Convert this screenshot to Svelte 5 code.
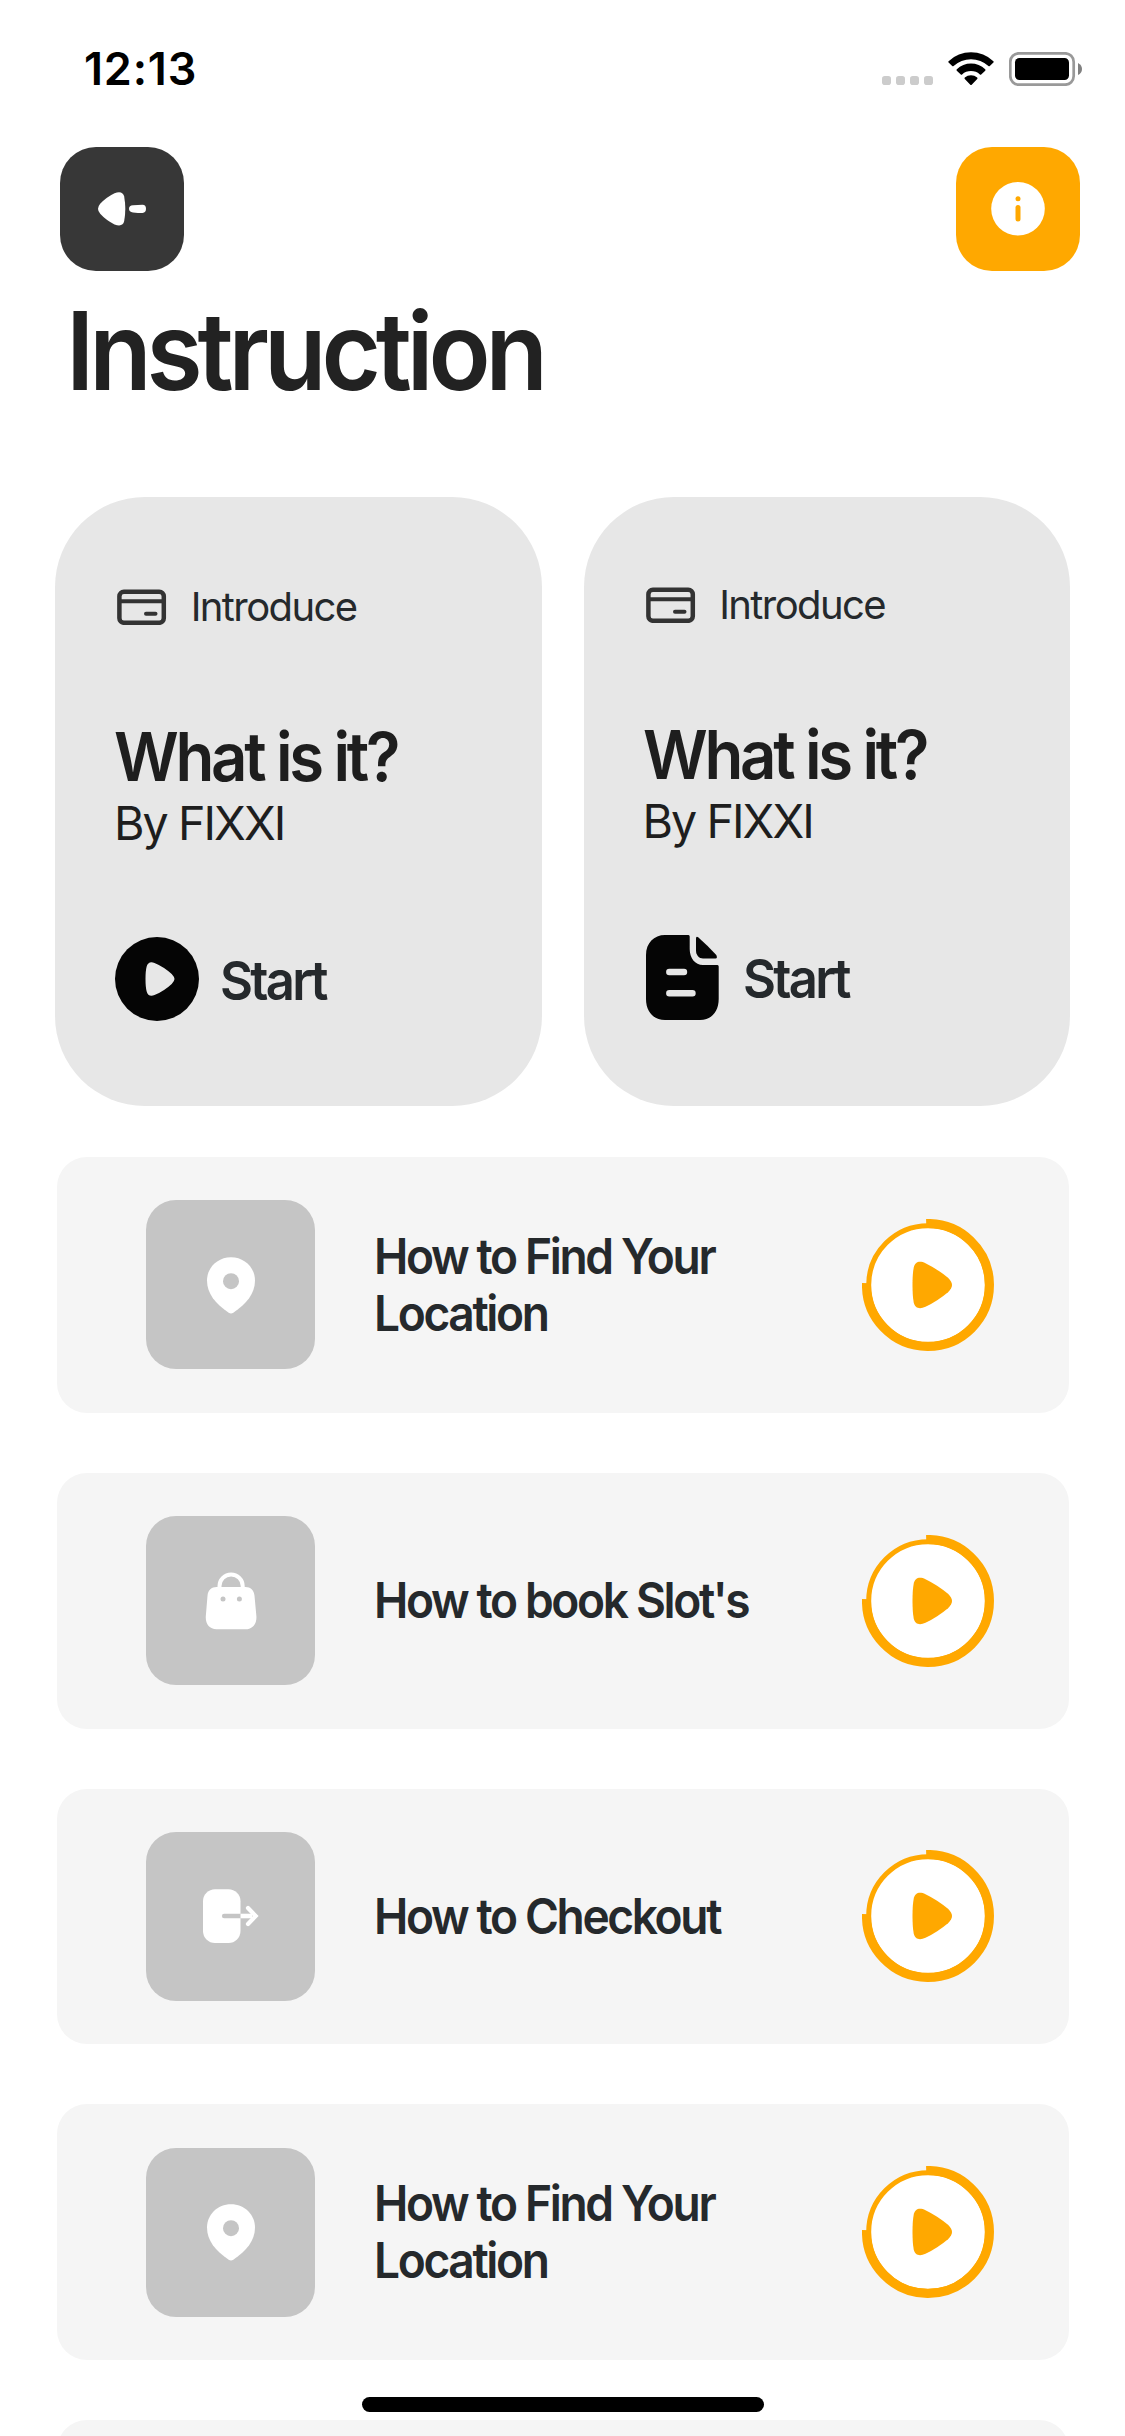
<script>
  const cards = [
    { kind: 'video', label: 'Introduce', title: 'What is it?', author: 'By FIXXI', action: 'Start' },
    { kind: 'doc', label: 'Introduce', title: 'What is it?', author: 'By FIXXI', action: 'Start' }
  ];

  const topics = [
    { icon: 'pin', text: 'How to Find Your Location' },
    { icon: 'bag', text: "How to book Slot's" },
    { icon: 'exit', text: 'How to Checkout' },
    { icon: 'pin', text: 'How to Find Your Location' }
  ];
</script>

<div class="screen">
  <header class="status">
    <span class="time">12:13</span>
    <div class="indicators">
      <svg class="dots" width="51" height="9" viewBox="0 0 51 9" fill="#ccc">
        <rect width="9" height="9" rx="2.8" />
        <rect x="14" width="9" height="9" rx="2.8" />
        <rect x="28" width="9" height="9" rx="2.8" />
        <rect x="42" width="9" height="9" rx="2.8" />
      </svg>
      <svg class="wifi" width="46" height="34" viewBox="0 0 46 34">
        <path d="M0.6 9.2A32.6 32.6 0 0 1 45.4 9.2Q46 9.9 45.4 10.5L41.8 14Q41.1 14.6 40.4 14A25.6 25.6 0 0 0 5.6 14Q4.9 14.6 4.2 14L0.6 10.5Q0 9.9 .6 9.2Z" />
        <path d="M8.8 17.3A20.6 20.6 0 0 1 37.2 17.3Q37.9 18 37.2 18.7L33.2 22.4Q32.6 23 31.9 22.4A13.6 13.6 0 0 0 14.1 22.4Q13.4 23 12.8 22.4L8.8 18.7Q8.1 18 8.8 17.3Z" />
        <path d="M16.8 25.5A9.6 9.6 0 0 1 29.2 25.5Q29.9 26.2 29.2 26.9L23.7 32.7Q23 33.3 22.3 32.7L16.8 26.9Q16.1 26.2 16.8 25.5Z" />
      </svg>
      <svg class="battery" width="73" height="34" viewBox="0 0 73 34">
        <rect x="1.3" y="1.3" width="63.4" height="31.4" rx="8.6" fill="none" stroke="#999" stroke-width="2.7" />
        <rect x="6" y="6" width="54" height="22" rx="4.5" />
        <path d="M69 11Q73 13 73 17Q73 21 69 23Z" fill="#808080" />
      </svg>
    </div>
  </header>

  <nav>
    <button class="square back" aria-label="Back">
      <svg width="124" height="124" viewBox="0 0 124 124" fill="#fff">
        <path d="M38 61.800Q38 59.400 40.200 56.800Q46 50.300 54.500 46.200C60 44 63.300 45.500 64.200 49.500Q65.300 56 65.300 61.800Q65.300 67.600 64.200 74.100C63.300 78.300 60 79.700 54.500 77.400Q46 73.300 40.200 66.800Q38 64.200 38 61.800Z" />
        <path d="M73 58.300Q78 57.800 82.500 57.700Q86 57.800 86 61.800Q86 65.800 82.500 66Q78 65.900 73 65.400Q69 65.100 69 61.800Q69 58.700 73 58.300Z" />
      </svg>
    </button>
    <button class="square info" aria-label="Information">
      <svg width="124" height="124" viewBox="0 0 124 124">
        <circle cx="62" cy="61.800" r="26.800" fill="#fff" />
        <circle cx="62" cy="51.700" r="2.500" fill="#ffa800" />
        <path d="M62 60.400V71.900" stroke="#ffa800" stroke-width="5" stroke-linecap="round" />
      </svg>
    </button>
  </nav>

  <h1>Instruction</h1>

  <section class="cards">
    {#each cards as card}
      <article class="card {card.kind}">
        <div class="label">
          <svg width="50" height="36" viewBox="0 0 50 36" fill="none" stroke="#333" stroke-width="4.500">
            <rect x="2.400" y="2.700" width="44.400" height="31.100" rx="4.500" />
            <path d="M2 12.200H47" stroke-width="4" />
            <path d="M29 24.800H38.500" stroke-width="4" stroke-linecap="round" />
          </svg>
          <span>{card.label}</span>
        </div>
        <h2>{card.title}</h2>
        <p>{card.author}</p>
        <div class="action">
          {#if card.kind === 'video'}
            <svg width="84" height="84" viewBox="0 0 84 84">
              <circle cx="42" cy="42" r="42" fill="#050505" />
              <path d="M30.500 42Q30.500 34 31.600 29.800C32.600 25.600 35.500 24.300 39.500 25.900Q49 29.800 56.700 37Q59.500 40 59.500 42Q59.500 44 56.700 47Q49 54.200 39.500 58.100C35.500 59.700 32.600 58.400 31.600 54.200Q30.500 50 30.500 42Z" fill="#e7e7e7" />
            </svg>
          {:else}
            <svg width="73" height="85" viewBox="0 0 73 85" fill="#050505">
              <path d="M19 0H42.500Q43.700 0 43.700 1.500V14C43.700 23 49 30 57 30H71.500Q72.700 30 72.700 31.500V64C72.700 77 65 85 54 85H19C8 85 0 77 0 64V20C0 8 8 0 19 0Z" />
              <path d="M50 3.500Q50 1 52.200 2.300Q62 11 70.300 20Q71.800 23.500 69.500 23.500H57C53 23.500 50 20 50 15.500Z" />
              <path d="M23.300 37H38M23.300 58.200H46.500" stroke="#e7e7e7" stroke-width="6.400" stroke-linecap="round" />
            </svg>
          {/if}
          <span>{card.action}</span>
        </div>
      </article>
    {/each}
  </section>

  <ul>
    {#each topics as topic}
      <li>
        <div class="tile">
          <svg width="60" height="60" viewBox="0 0 60 60" fill="#fff">
            {#if topic.icon === 'pin'}
              <path d="M30 2.200C16.500 2.200 6 12.500 6 25.500C6 38.500 14.500 49 27.700 57.700Q30 59.200 32.300 57.700C45.500 49 54 38.500 54 25.500C54 12.500 43.500 2.200 30 2.200Z" />
              <circle cx="30" cy="26.200" r="8" fill="#c5c5c5" />
            {:else if topic.icon === 'bag'}
              <path d="M18.500 18V15A11.600 11.500 0 0 1 41.700 15V18" fill="none" stroke="#fff" stroke-width="4" />
              <path d="M15.500 16H44.500C49.500 16 53 19.300 53.500 24.800L55.400 45.300C55.900 53 51.500 58.200 44.500 58.200H15.500C8.500 58.200 4.300 53 4.800 45.300L6.500 24.800C7 19.300 10.500 16 15.500 16Z" />
              <circle cx="22" cy="27.900" r="2.500" fill="#c5c5c5" />
              <circle cx="38.400" cy="27.900" r="2.500" fill="#c5c5c5" />
            {:else}
              <rect x="2" y="3.200" width="37.500" height="53.800" rx="12" />
              <path d="M23.200 30H39.500" stroke="#c5c5c5" stroke-width="4.600" stroke-linecap="round" />
              <path d="M39.500 27.700H51V32.300H39.500Z" />
              <path d="M47 22L54.700 30L47 38" fill="none" stroke="#fff" stroke-width="4.200" stroke-linecap="round" />
            {/if}
          </svg>
        </div>
        <span class="topic">{topic.text}</span>
        <svg class="play" width="132" height="132" viewBox="0 0 132 132">
          <circle cx="66" cy="66" r="59.300" fill="#fff" stroke="#ffa800" stroke-width="5" />
          <path d="M64.200 4.500A61.500 61.500 0 1 1 4.500 64.200" fill="none" stroke="#ffa800" stroke-width="9" />
          <path d="M50.500 66Q50.500 55 51.700 48.800C53 42.700 57.500 41.500 63.500 44.200Q75.500 50 86 58.800Q90 62.800 90 66Q90 69.200 86 73.200Q75.500 82 63.500 87.800C57.500 90.500 53 89.300 51.700 83.200Q50.500 77 50.500 66Z" fill="#ffa800" />
        </svg>
      </li>
    {/each}
    <li></li>
  </ul>

  <div class="home-indicator"></div>
</div>

<style>
  :global(body) {
    background: #fff;
    overflow: hidden;
  }

  .screen {
    position: relative;
    box-sizing: border-box;
    width: 1125px;
    height: 2436px;
    overflow: hidden;
    background: #fff;
    color: #222;
    font-family: Inter, 'Liberation Sans', sans-serif;
  }

  .status {
    display: flex;
    justify-content: space-between;
    box-sizing: border-box;
    height: 147px;
    padding: 52px 43px 0 84px;
  }

  .time {
    color: #000;
    font-size: 45px;
    font-weight: 600;
    line-height: 34px;
    letter-spacing: 0.800px;
  }

  .indicators {
    display: flex;
    align-items: flex-start;
  }

  .dots {
    margin-top: 24px;
  }

  .wifi {
    margin-left: 15px;
  }

  .battery {
    margin-left: 15px;
  }

  nav {
    display: flex;
    justify-content: space-between;
    padding: 0 45px 0 60px;
  }

  .square {
    display: flex;
    width: 124px;
    height: 124px;
    padding: 0;
    border: 0;
    border-radius: 36px;
  }

  .back {
    background: #373737;
  }

  .info {
    background: #ffa800;
  }

  /* The display face is set slightly condensed. */
  h1,
  h2,
  .action span,
  .topic {
    transform: scaleX(0.94);
    transform-origin: left;
  }

  h1 {
    margin: 20px 0 86px 66px;
    font-size: 108.600px;
    font-weight: 600;
    line-height: 120px;
    letter-spacing: -5.400px;
  }

  .cards {
    display: flex;
    gap: 42px;
    padding-left: 55px;
  }

  .card {
    box-sizing: border-box;
    width: 486.500px;
    height: 608.700px;
    padding: 90px 0 0 60px;
    border-radius: 90px;
    background: #e7e7e7;
  }

  .card.doc {
    padding-top: 87.700px;
  }

  .label {
    display: flex;
    align-items: center;
    gap: 23.700px;
    height: 40px;
    padding-left: 2px;
    color: #25292c;
    font-size: 40px;
    line-height: 40px;
    letter-spacing: -1.600px;
  }

  h2 {
    margin: 90px 0 0 -1px;
    color: #1e1e1e;
    font-size: 67.500px;
    font-weight: 640;
    line-height: 80px;
    letter-spacing: -3.500px;
  }

  p {
    margin: 1px 0 0 -1px;
    color: #1e1e1e;
    font-size: 46.600px;
    line-height: 50px;
    letter-spacing: -1.950px;
  }

  .action {
    display: flex;
    align-items: center;
    gap: 21px;
    margin-top: 89px;
    color: #25292c;
    font-size: 54px;
    font-weight: 620;
    letter-spacing: -2.900px;
  }

  .action span {
    padding-top: 3px;
    line-height: 80px;
  }

  .doc .action {
    gap: 24.300px;
    padding-left: 2.500px;
  }

  ul {
    display: flex;
    flex-direction: column;
    gap: 60px;
    margin: 51.300px 56px 0 56.500px;
    padding: 0;
    list-style: none;
  }

  li {
    display: flex;
    align-items: center;
    box-sizing: border-box;
    flex: none;
    height: 255.800px;
    padding: 0 75px 0 89.500px;
    border-radius: 30px;
    background: #f5f5f5;
  }

  .tile {
    display: flex;
    align-items: center;
    justify-content: center;
    width: 169px;
    height: 169px;
    border-radius: 30px;
    background: #c5c5c5;
  }

  .topic {
    width: 420px;
    margin-left: 59px;
    color: #25292c;
    font-size: 49px;
    font-weight: 620;
    line-height: 57px;
    letter-spacing: -2.500px;
  }

  .play {
    margin-left: auto;
  }

  .home-indicator {
    position: absolute;
    bottom: 24px;
    left: 362px;
    width: 402px;
    height: 15px;
    border-radius: 8px;
    background: #000;
  }
</style>
